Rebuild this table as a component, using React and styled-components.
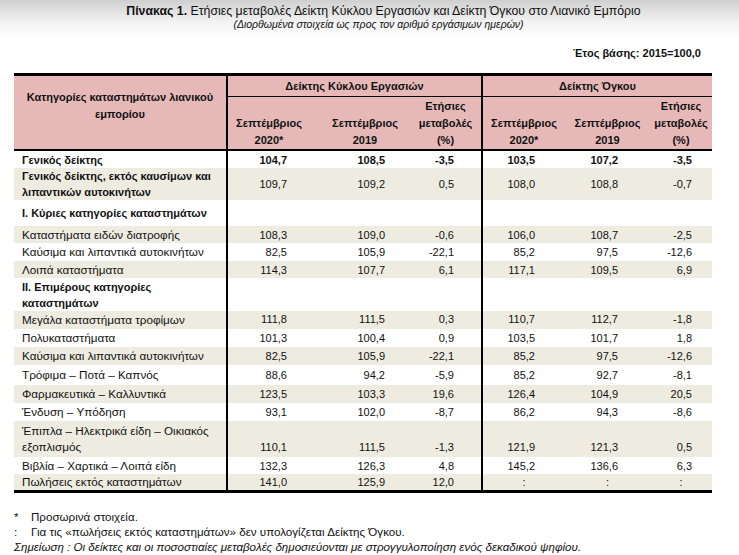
import React from "react";
import styled, { createGlobalStyle } from "styled-components";

const rows = [
  { label: "Γενικός δείκτης", bold: true, h: 18, v: ["104,7", "108,5", "-3,5", "103,5", "107,2", "-3,5"] },
  { label: "Γενικός δείκτης, εκτός καυσίμων και λιπαντικών αυτοκινήτων", bold: true, h: 32, v: ["109,7", "109,2", "0,5", "108,0", "108,8", "-0,7"] },
  { label: "I. Κύριες κατηγορίες καταστημάτων", bold: true, h: 26, v: null },
  { label: "Καταστήματα ειδών διατροφής", h: 17, v: ["108,3", "109,0", "-0,6", "106,0", "108,7", "-2,5"] },
  { label: "Καύσιμα και λιπαντικά αυτοκινήτων", h: 18, v: ["82,5", "105,9", "-22,1", "85,2", "97,5", "-12,6"] },
  { label: "Λοιπά καταστήματα", h: 17, v: ["114,3", "107,7", "6,1", "117,1", "109,5", "6,9"] },
  { label: "II. Επιμέρους κατηγορίες καταστημάτων", bold: true, h: 33, narrow: true, v: null },
  { label: "Μεγάλα καταστήματα τροφίμων", h: 17, bottom: true, v: ["111,8", "111,5", "0,3", "110,7", "112,7", "-1,8"] },
  { label: "Πολυκαταστήματα", h: 18, v: ["101,3", "100,4", "0,9", "103,5", "101,7", "1,8"] },
  { label: "Καύσιμα και λιπαντικά αυτοκινήτων", h: 18, v: ["82,5", "105,9", "-22,1", "85,2", "97,5", "-12,6"] },
  { label: "Τρόφιμα – Ποτά – Καπνός", h: 20, v: ["88,6", "94,2", "-5,9", "85,2", "92,7", "-8,1"] },
  { label: "Φαρμακευτικά – Καλλυντικά", h: 18, v: ["123,5", "103,3", "19,6", "126,4", "104,9", "20,5"] },
  { label: "Ένδυση – Υπόδηση", h: 18, v: ["93,1", "102,0", "-8,7", "86,2", "94,3", "-8,6"] },
  { label: "Έπιπλα – Ηλεκτρικά είδη – Οικιακός εξοπλισμός", h: 36, bottom: true, v: ["110,1", "111,5", "-1,3", "121,9", "121,3", "0,5"] },
  { label: "Βιβλία – Χαρτικά – Λοιπά είδη", h: 17, v: ["132,3", "126,3", "4,8", "145,2", "136,6", "6,3"] },
  { label: "Πωλήσεις εκτός καταστημάτων", h: 17, v: ["141,0", "125,9", "12,0", ":", ":", ":"] },
];

const cols = [
  { w: 93, pr: 33 },
  { w: 90, pr: 25 },
  { w: 72, pr: 27, thick: true },
  { w: 83, pr: 30 },
  { w: 85, pr: 32 },
  { w: 62, pr: 20 },
];

const Global = createGlobalStyle`
  body {
    margin: 0;
    background: linear-gradient(#cfcfcf 0px, #f3f3f3 22px, #ffffff 38px);
    font-family: "Liberation Sans", Arial, sans-serif;
    color: #111;
  }
`;

const Page = styled.div`
  width: 739px;
  height: 555px;
  padding-top: 4px;
  box-sizing: border-box;
  overflow: hidden;
`;

const Title = styled.div`
  text-align: center;
  font-size: 12.3px;
  line-height: 14px;
  padding-left: 28px;
  b { font-weight: bold; }
`;

const Subtitle = styled.div`
  text-align: center;
  font-size: 10.5px;
  font-style: italic;
  line-height: 13px;
  padding-left: 18px;
`;

const Base = styled.div`
  text-align: right;
  font-size: 11px;
  font-weight: bold;
  margin: 15px 38px 0 0;
  line-height: 14px;
`;

const Table = styled.table`
  margin: 13px 0 0 14px;
  width: 698px;
  border-collapse: collapse;
  table-layout: fixed;
  font-size: 11px;
  border-top: 3px solid #000;
  border-bottom: 3px solid #000;
`;

const HeadCell = styled.th`
  background: #e6b9b8;
  font-weight: bold;
  padding: 0 ${(p) => p.$pr || 0}px 0 0;
  text-align: center;
  line-height: 17px;
  vertical-align: ${(p) => (p.$top ? "middle" : "bottom")};
  border-right: ${(p) => (p.$thick ? "2px solid #000" : "none")};
  border-bottom: ${(p) => (p.$line ? "1px solid #000" : "none")};
  height: ${(p) => p.$h}px;
`;

const LabelHead = styled(HeadCell)`
  padding: 0 10px 14px;
  line-height: 17px;
  vertical-align: middle;
`;

const Row = styled.tr`
  background: ${(p) => (p.$alt ? "#eeece1" : "#ffffff")};
  height: ${(p) => p.$h}px;
  border-top: ${(p) => (p.$first ? "2px solid #000" : "none")};
`;

const Label = styled.td`
  padding: 0 ${(p) => (p.$narrow ? 40 : 8)}px 0 8px;
  font-weight: ${(p) => (p.$bold ? "bold" : "normal")};
  font-size: ${(p) => (p.$bold ? 11 : 11.7)}px;
  line-height: 16px;
  border-right: 2px solid #000;
  vertical-align: middle;
`;

const Num = styled.td`
  padding: 0 ${(p) => p.$pr}px 0 0;
  text-align: ${(p) => (p.$colon ? "center" : "right")};
  font-weight: ${(p) => (p.$bold ? "bold" : "normal")};
  vertical-align: ${(p) => (p.$bottom ? "bottom" : "middle")};
  padding-bottom: ${(p) => (p.$bottom ? 2 : 0)}px;
  border-right: ${(p) => (p.$thick ? "2px solid #000" : "none")};
  line-height: 16px;
`;

const Notes = styled.div`
  margin: 16px 0 0 14px;
  font-size: 11.6px;
  line-height: 15px;
`;

const Note = styled.div`
  display: flex;
  span:first-child { width: 17px; }
`;

const Remark = styled.div`
  font-style: italic;
`;

export default function App() {
  return (
    <Page>
      <Global />
      <Title>
        <b>Πίνακας 1.</b> Ετήσιες μεταβολές Δείκτη Κύκλου Εργασιών και Δείκτη Όγκου στο Λιανικό Εμπόριο
      </Title>
      <Subtitle>(Διορθωμένα στοιχεία ως προς τον αριθμό εργάσιμων ημερών)</Subtitle>
      <Base>Έτος βάσης: 2015=100,0</Base>
      <Table>
        <colgroup>
          <col style={{ width: 213 }} />
          {cols.map((c, i) => (
            <col key={i} style={{ width: c.w }} />
          ))}
        </colgroup>
        <thead>
          <tr>
            <LabelHead rowSpan={2} $thick>
              Κατηγορίες καταστημάτων λιανικού εμπορίου
            </LabelHead>
            <HeadCell colSpan={3} $top $thick $line $h={20}>
              Δείκτης Κύκλου Εργασιών
            </HeadCell>
            <HeadCell colSpan={3} $top $line $h={20}>
              Δείκτης Όγκου
            </HeadCell>
          </tr>
          <tr>
            {[0, 1].map((g) => (
              <React.Fragment key={g}>
                <HeadCell $h={52} $pr={g === 0 ? 10 : 0}>
                  Σεπτέμβριος
                  <br />
                  2020*
                </HeadCell>
                <HeadCell $h={52}>
                  Σεπτέμβριος
                  <br />
                  2019
                </HeadCell>
                <HeadCell $h={52} $thick={g === 0}>
                  Ετήσιες
                  <br />
                  μεταβολές
                  <br />
                  (%)
                </HeadCell>
              </React.Fragment>
            ))}
          </tr>
        </thead>
        <tbody>
          {rows.map((r, i) => (
            <Row key={i} $alt={i % 2 === 1} $h={r.h} $first={i === 0}>
              <Label $bold={r.bold} $narrow={r.narrow}>
                {r.label}
              </Label>
              {cols.map((c, j) => (
                <Num
                  key={j}
                  $pr={r.v && r.v[j] === ":" ? 0 : c.pr}
                  $colon={r.v && r.v[j] === ":"}
                  $thick={c.thick}
                  $bold={r.bold && i === 0}
                  $bottom={r.bottom}
                >
                  {r.v ? r.v[j] : ""}
                </Num>
              ))}
            </Row>
          ))}
        </tbody>
      </Table>
      <Notes>
        <Note>
          <span>*</span>
          <span>Προσωρινά στοιχεία.</span>
        </Note>
        <Note>
          <span>:</span>
          <span>Για τις «πωλήσεις εκτός καταστημάτων» δεν υπολογίζεται Δείκτης Όγκου.</span>
        </Note>
        <Remark>
          Σημείωση : Οι δείκτες και οι ποσοστιαίες μεταβολές δημοσιεύονται με στρογγυλοποίηση ενός δεκαδικού ψηφίου.
        </Remark>
      </Notes>
    </Page>
  );
}
